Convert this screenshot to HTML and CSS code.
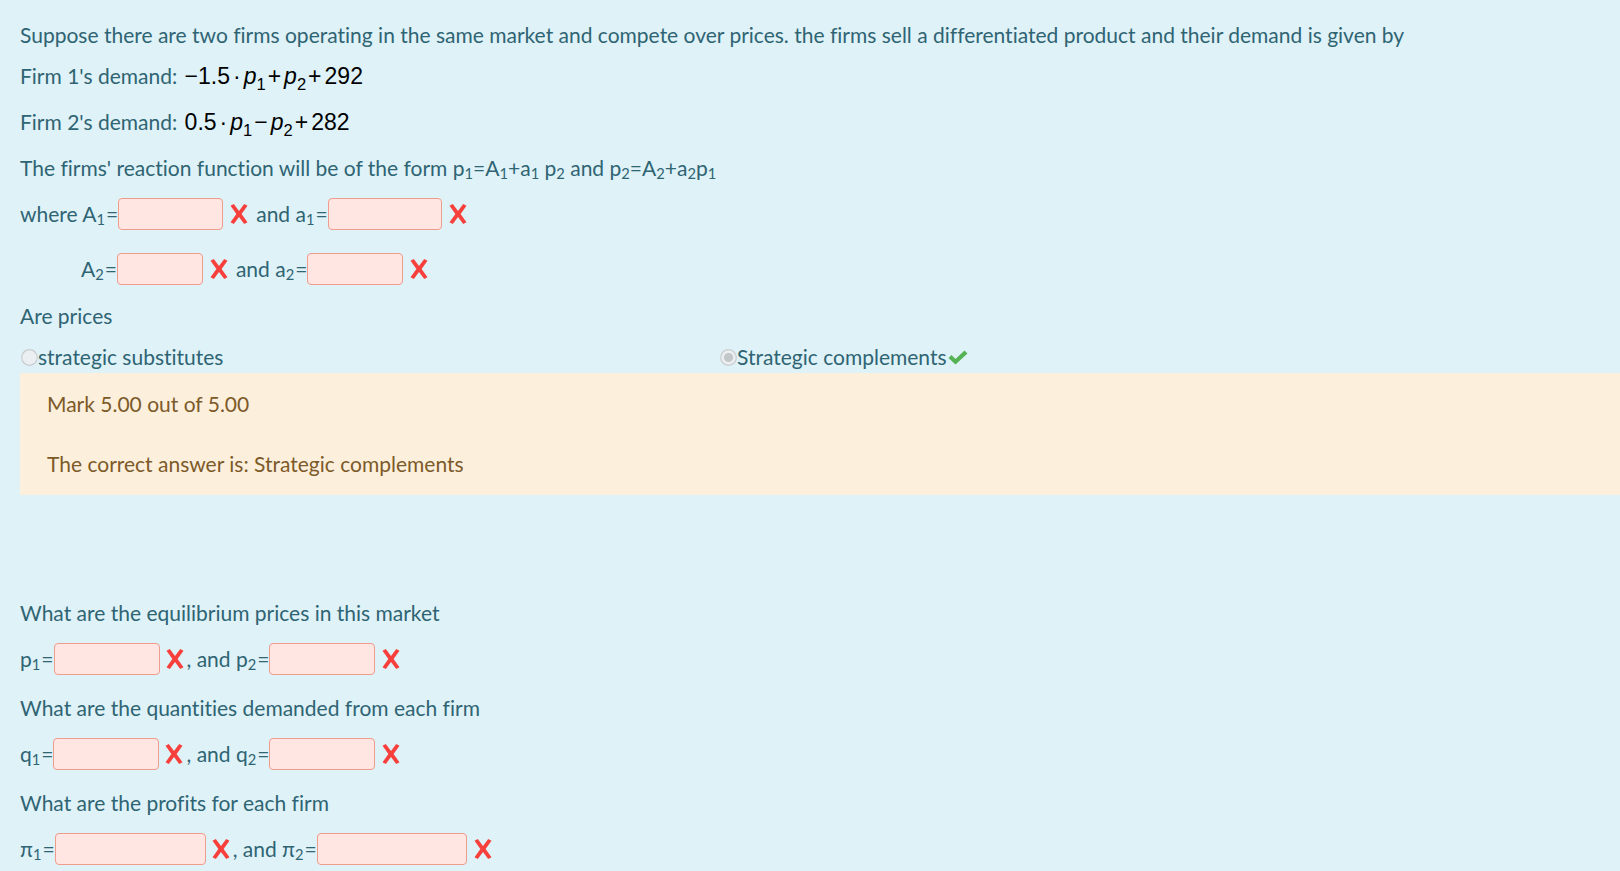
FILE: index.html
```html
<!DOCTYPE html>
<html lang="en">
<head>
<meta charset="utf-8">
<title>Question</title>
<link rel="stylesheet" href="styles.css">
</head>
<body>
<div class="que">
  <div class="formulation">
    <p class="line first">Suppose there are two firms operating in the same market and compete over prices. the firms sell a differentiated product and their demand is given by</p>
    <p class="line g9">Firm 1's demand: <span class="math">−1.5<span class="dot">·</span><i>p</i><sub class="msub">1</sub><span class="op">+</span><i>p</i><sub class="msub">2</sub><span class="op">+</span>292</span></p>
    <p class="line g14">Firm 2's demand: <span class="math">0.5<span class="dot">·</span><i>p</i><sub class="msub">1</sub><span class="op">−</span><i>p</i><sub class="msub">2</sub><span class="op">+</span>282</span></p>
    <p class="line g14">The firms' reaction function will be of the form p<sub class="s">1</sub>=A<sub class="s">1</sub>+a<sub class="s">1</sub> p<sub class="s">2</sub> and p<sub class="s">2</sub>=A<sub class="s">2</sub>+a<sub class="s">2</sub>p<sub class="s">1</sub></p>

    <div class="row g14">
      <span class="lbl">where A<sub class="s">1</sub>=</span>
      <input class="ans w105" type="text">
      <svg class="x" viewBox="0 0 18 20"><path d="M0.5 1.8 L3.8 0 L9 7 L14.2 0 L17.5 1.8 L11.6 10 L17.5 18.2 L14.2 20 L9 13 L3.8 20 L0.5 18.2 L6.4 10 Z"/></svg>
      <span class="lbl">and a<sub class="s">1</sub>=</span>
      <input class="ans w114" type="text">
      <svg class="x" viewBox="0 0 18 20"><path d="M0.5 1.8 L3.8 0 L9 7 L14.2 0 L17.5 1.8 L11.6 10 L17.5 18.2 L14.2 20 L9 13 L3.8 20 L0.5 18.2 L6.4 10 Z"/></svg>
    </div>

    <div class="row g23 indent">
      <span class="lbl">A<sub class="s">2</sub>=</span>
      <input class="ans w86" type="text">
      <svg class="x" viewBox="0 0 18 20"><path d="M0.5 1.8 L3.8 0 L9 7 L14.2 0 L17.5 1.8 L11.6 10 L17.5 18.2 L14.2 20 L9 13 L3.8 20 L0.5 18.2 L6.4 10 Z"/></svg>
      <span class="lbl">and a<sub class="s">2</sub>=</span>
      <input class="ans w96" type="text">
      <svg class="x" viewBox="0 0 18 20"><path d="M0.5 1.8 L3.8 0 L9 7 L14.2 0 L17.5 1.8 L11.6 10 L17.5 18.2 L14.2 20 L9 13 L3.8 20 L0.5 18.2 L6.4 10 Z"/></svg>
    </div>

    <p class="line g15">Are prices</p>

    <div class="options g9">
      <label class="opt first-opt">
        <svg class="radio" viewBox="0 0 17 17"><circle cx="8.5" cy="8.5" r="7.8" fill="#eceff1" stroke="#c9cdd0" stroke-width="1.2"/></svg>
        <span>strategic substitutes</span>
      </label>
      <label class="opt">
        <svg class="radio" viewBox="0 0 17 17"><circle cx="8.5" cy="8.5" r="7.8" fill="#eceff1" stroke="#c9cdd0" stroke-width="1.2"/><circle cx="8.5" cy="8.5" r="4.6" fill="#c4c7ca"/></svg>
        <span>Strategic complements</span>
        <svg class="check" viewBox="0 0 20 15"><path d="M0.5 8 L3.5 5 L7.5 9 L16.5 0.5 L19.5 3.5 L7.5 14.5 Z"/></svg>
      </label>
    </div>

    <div class="outcome">
      <p class="oline">Mark 5.00 out of 5.00</p>
      <p class="oline second">The correct answer is: Strategic complements</p>
    </div>

    <p class="line g102">What are the equilibrium prices in this market</p>
    <div class="row g14">
      <span class="lbl">p<sub class="s">1</sub>=</span>
      <input class="ans w106" type="text">
      <svg class="x tight" viewBox="0 0 18 20"><path d="M0.5 1.8 L3.8 0 L9 7 L14.2 0 L17.5 1.8 L11.6 10 L17.5 18.2 L14.2 20 L9 13 L3.8 20 L0.5 18.2 L6.4 10 Z"/></svg>
      <span class="lbl">, and p<sub class="s">2</sub>=</span>
      <input class="ans w106" type="text">
      <svg class="x" viewBox="0 0 18 20"><path d="M0.5 1.8 L3.8 0 L9 7 L14.2 0 L17.5 1.8 L11.6 10 L17.5 18.2 L14.2 20 L9 13 L3.8 20 L0.5 18.2 L6.4 10 Z"/></svg>
    </div>

    <p class="line g17">What are the quantities demanded from each firm</p>
    <div class="row g14">
      <span class="lbl">q<sub class="s">1</sub>=</span>
      <input class="ans w106" type="text">
      <svg class="x tight" viewBox="0 0 18 20"><path d="M0.5 1.8 L3.8 0 L9 7 L14.2 0 L17.5 1.8 L11.6 10 L17.5 18.2 L14.2 20 L9 13 L3.8 20 L0.5 18.2 L6.4 10 Z"/></svg>
      <span class="lbl">, and q<sub class="s">2</sub>=</span>
      <input class="ans w106" type="text">
      <svg class="x" viewBox="0 0 18 20"><path d="M0.5 1.8 L3.8 0 L9 7 L14.2 0 L17.5 1.8 L11.6 10 L17.5 18.2 L14.2 20 L9 13 L3.8 20 L0.5 18.2 L6.4 10 Z"/></svg>
    </div>

    <p class="line g17">What are the profits for each firm</p>
    <div class="row g14">
      <span class="lbl">π<sub class="s">1</sub>=</span>
      <input class="ans w151" type="text">
      <svg class="x tight" viewBox="0 0 18 20"><path d="M0.5 1.8 L3.8 0 L9 7 L14.2 0 L17.5 1.8 L11.6 10 L17.5 18.2 L14.2 20 L9 13 L3.8 20 L0.5 18.2 L6.4 10 Z"/></svg>
      <span class="lbl">, and π<sub class="s">2</sub>=</span>
      <input class="ans w150" type="text">
      <svg class="x" viewBox="0 0 18 20"><path d="M0.5 1.8 L3.8 0 L9 7 L14.2 0 L17.5 1.8 L11.6 10 L17.5 18.2 L14.2 20 L9 13 L3.8 20 L0.5 18.2 L6.4 10 Z"/></svg>
    </div>
  </div>
</div>
</body>
</html>
```
FILE: styles.css
```css
html, body {
  margin: 0;
  padding: 0;
  background: #def2f8;
}

body {
  font-family: Lato, "Noto Sans", "DejaVu Sans", sans-serif;
  font-size: 21px;
  color: #2f6473;
  overflow: hidden;
  font-variant-ligatures: none;
}

.formulation {
  padding: 19px 0 0 20px;
}

.line {
  margin: 0;
  height: 32px;
  line-height: 32px;
  white-space: nowrap;
}

.line.g9, .options.g9 { margin-top: 9px; }
.line.g14, .row.g14 { margin-top: 14px; }
.line.g15 { margin-top: 15px; }
.line.g17 { margin-top: 17px; }
.row.g23 { margin-top: 23px; }
.line.g102 { margin-top: 102px; }

.s {
  font-size: 0.7em;
  line-height: 0;
  vertical-align: -0.2em;
}

.row .s {
  margin-right: 1px;
}

.math {
  font-family: "Liberation Sans", Arial, sans-serif;
  font-size: 23px;
  color: #000;
  margin-left: 2px;
}

.math i {
  font-style: italic;
}

.msub {
  font-size: 0.72em;
  line-height: 0;
  vertical-align: -0.38em;
}

.dot {
  margin: 0 3px;
}

.op {
  margin: 0 3px 0 2px;
}

.row {
  display: flex;
  align-items: center;
  height: 32px;
  line-height: 32px;
  white-space: pre;
}

.indent {
  padding-left: 61px;
}

.ans {
  box-sizing: border-box;
  height: 32px;
  margin: 0;
  padding: 0;
  border: 1px solid #ef9c8c;
  border-radius: 4px;
  background: #ffe6e3;
}

.w86 { width: 86px; }
.w96 { width: 96px; }
.w105 { width: 105px; }
.w106 { width: 106px; }
.w114 { width: 114px; }
.w150 { width: 150px; }
.w151 { width: 151px; }

.x {
  width: 18px;
  height: 20px;
  margin: 0 8px 0 7px;
  fill: #f7403c;
  flex: none;
}

.x.tight {
  margin: 0 3px 0 6px;
}

.options {
  display: flex;
  height: 32px;
  line-height: 32px;
}

.opt {
  display: flex;
  align-items: center;
}

.first-opt {
  width: 699px;
}

.radio {
  width: 17px;
  height: 17px;
  margin-left: 1px;
  flex: none;
}

.check {
  width: 20px;
  height: 15px;
  margin-left: 1px;
  fill: #55b354;
}

.outcome {
  background: #fcefdc;
  color: #7d5a29;
  padding: 15px 0 15px 27px;
}

.oline {
  margin: 0;
  height: 32px;
  line-height: 32px;
}

.oline.second {
  margin-top: 28px;
}
```
